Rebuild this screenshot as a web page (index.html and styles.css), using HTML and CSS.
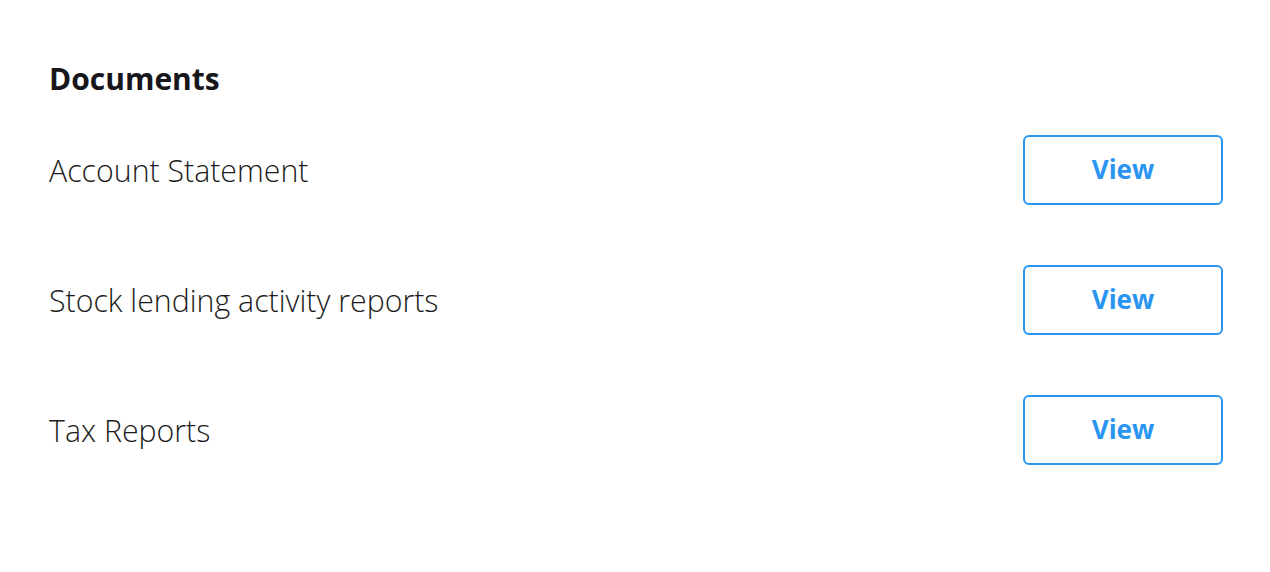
FILE: index.html
```html
<!DOCTYPE html>
<html lang="en">
<head>
<meta charset="utf-8">
<title>Documents</title>
<link rel="stylesheet" href="styles.css">
</head>
<body>
<main class="page">
  <h2 class="title">Documents</h2>
  <ul class="doc-list">
    <li class="doc-row">
      <span class="doc-name">Account Statement</span>
      <button class="view-btn" type="button">View</button>
    </li>
    <li class="doc-row">
      <span class="doc-name">Stock lending activity reports</span>
      <button class="view-btn" type="button">View</button>
    </li>
    <li class="doc-row">
      <span class="doc-name">Tax Reports</span>
      <button class="view-btn" type="button">View</button>
    </li>
  </ul>
</main>
</body>
</html>
```
FILE: styles.css
```css
html, body {
  margin: 0;
  padding: 0;
  background: #ffffff;
}

body {
  font-family: "Open Sans", "Noto Sans", "Liberation Sans", sans-serif;
  color: #1c1c20;
}

.page {
  padding: 63px 47px 0 49px;
}

.title {
  margin: 0;
  font-size: 30px;
  line-height: 32px;
  font-weight: 700;
  color: #16161b;
}

.doc-list {
  list-style: none;
  margin: 40px 0 0;
  padding: 0;
  display: flex;
  flex-direction: column;
  gap: 60px;
}

.doc-row {
  display: flex;
  align-items: center;
  justify-content: space-between;
  height: 70px;
}

.doc-name {
  font-size: 30.3px;
  font-weight: 300;
  color: #1c1c20;
}

.view-btn {
  width: 200px;
  height: 70px;
  box-sizing: border-box;
  border: 2px solid #2a95f0;
  border-radius: 6px;
  background: #ffffff;
  color: #2a95f0;
  font-family: inherit;
  font-size: 26px;
  font-weight: 700;
  padding: 0 0 2px;
  cursor: pointer;
}
```
